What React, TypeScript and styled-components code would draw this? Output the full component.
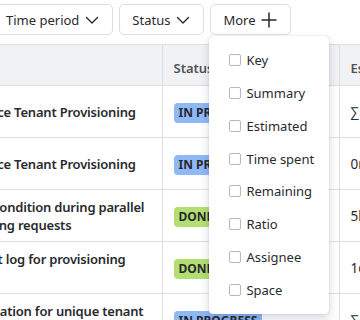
import React from 'react';
import styled, { createGlobalStyle } from 'styled-components';

const GlobalStyle = createGlobalStyle`
  html, body {
    margin: 0;
    padding: 0;
    background: #ffffff;
  }
  body {
    font-family: "Noto Sans", "Open Sans", sans-serif;
    color: #292a2e;
    overflow: hidden;
  }
`;

type Status = 'progress' | 'done';

interface Row {
  summary: string;
  status: Status;
  estimate: string;
}

const rows: Row[] = [
  { summary: 'Workspace Tenant Provisioning', status: 'progress', estimate: '∑' },
  { summary: 'Workspace Tenant Provisioning', status: 'progress', estimate: '0m' },
  { summary: 'Fix race condition during parallel onboarding requests', status: 'done', estimate: '5h' },
  { summary: 'Add audit log for provisioning events', status: 'done', estimate: '1d' },
  { summary: 'Add validation for unique tenant names', status: 'progress', estimate: '∑' },
];

const columns = ['Key', 'Summary', 'Estimated', 'Time spent', 'Remaining', 'Ratio', 'Assignee', 'Space'];

const Chevron = () => (
  <svg width="14" height="14" viewBox="0 0 14 14" fill="none">
    <path d="M1.5 4.5 L7 10 L12.5 4.5" stroke="#292a2e" strokeWidth="1.4" strokeLinecap="round" strokeLinejoin="round" />
  </svg>
);

const Plus = () => (
  <svg width="16" height="16" viewBox="0 0 16 16" fill="none">
    <path d="M8 1 V15 M1 8 H15" stroke="#292a2e" strokeWidth="1.5" strokeLinecap="round" />
  </svg>
);

const App: React.FC = () => {
  return (
    <>
      <GlobalStyle />
      <Page>
        <Scrolled>
          <Toolbar>
            <FilterButton>
              Time period <Chevron />
            </FilterButton>
            <FilterButton>
              Status <Chevron />
            </FilterButton>
            <MoreWrap>
              <FilterButton $wide>
                More <Plus />
              </FilterButton>
              <Menu>
                {columns.map((c) => (
                  <MenuItem key={c}>
                    <Check />
                    {c}
                  </MenuItem>
                ))}
              </Menu>
            </MoreWrap>
          </Toolbar>
          <Table>
            <colgroup>
              <col style={{ width: 231 }} />
              <col style={{ width: 177 }} />
              <col style={{ width: 120 }} />
            </colgroup>
            <thead>
              <tr>
                <HeadCell>Title</HeadCell>
                <HeadCell>Status</HeadCell>
                <HeadCell>Estimated</HeadCell>
              </tr>
            </thead>
            <tbody>
              {rows.map((r, i) => (
                <tr key={i}>
                  <SummaryCell>{r.summary}</SummaryCell>
                  <Cell>
                    <Lozenge $status={r.status}>{r.status === 'done' ? 'Done' : 'In progress'}</Lozenge>
                  </Cell>
                  <ValueCell>{r.estimate}</ValueCell>
                </tr>
              ))}
            </tbody>
          </Table>
        </Scrolled>
      </Page>
    </>
  );
};

export default App;

// --- styled components ---
const Page = styled.div`
  width: 360px;
  height: 320px;
  overflow: hidden;
`;

const Scrolled = styled.div`
  margin-left: -69px;
  width: 600px;
`;

const Toolbar = styled.div`
  display: flex;
  gap: 6px;
  padding: 4px 0 0 62px;
  height: 44px;
  box-sizing: border-box;
`;

const FilterButton = styled.button<{ $wide?: boolean }>`
  display: flex;
  align-items: center;
  gap: ${(p) => (p.$wide ? '5px' : '6px')};
  height: 31px;
  padding: 0 13px 0 12px;
  border: 1px solid #dcdde0;
  border-radius: 5px;
  background: #ffffff;
  font-family: "Noto Sans", "Open Sans", sans-serif;
  font-size: 13px;
  color: #292a2e;
  cursor: pointer;
`;

const MoreWrap = styled.div`
  position: relative;
`;

const Menu = styled.div`
  position: absolute;
  top: 32px;
  left: -1px;
  width: 120px;
  padding: 8px 0;
  background: #ffffff;
  border-radius: 4px;
  box-shadow: 0 4px 10px rgba(9, 30, 66, 0.18), 0 0 1px rgba(9, 30, 66, 0.3);
  z-index: 10;
`;

const MenuItem = styled.label`
  display: flex;
  align-items: center;
  gap: 5px;
  height: 32.75px;
  padding-left: 20px;
  font-size: 13px;
  color: #292a2e;
`;

const Check = styled.span`
  width: 10px;
  height: 10px;
  border: 1.5px solid #b7b9be;
  border-radius: 2px;
  background: #ffffff;
`;

const Table = styled.table`
  table-layout: fixed;
  border-collapse: collapse;
  width: 528px;
`;

const HeadCell = styled.th`
  height: 41px;
  padding: 6px 10px 0 11px;
  background: #f1f2f4;
  border: 1px solid #dddee1;
  border-left: none;
  text-align: left;
  font-size: 13px;
  font-weight: 600;
  color: #505258;
  box-sizing: border-box;
  white-space: nowrap;
  overflow: hidden;
`;

const Cell = styled.td`
  height: 52px;
  padding: 0 10px 0 11px;
  border-bottom: 1px solid #dddee1;
  border-right: 1px solid #dddee1;
  vertical-align: middle;
  box-sizing: border-box;
`;

const SummaryCell = styled(Cell)`
  padding: 0 5px 0 12px;
  font-size: 13px;
  font-weight: 600;
  letter-spacing: -0.2px;
  line-height: 18px;
  color: #292a2e;
`;

const ValueCell = styled(Cell)`
  font-size: 13.5px;
  color: #292a2e;
`;

const Lozenge = styled.span<{ $status: Status }>`
  display: inline-block;
  height: 20px;
  line-height: 20px;
  padding: 0 5px;
  border-radius: 4px;
  background: ${(p) => (p.$status === 'done' ? '#b3df72' : '#8fb8f6')};
  font-size: 12px;
  font-weight: 700;
  text-transform: uppercase;
  color: #292a2e;
  white-space: nowrap;
`;
